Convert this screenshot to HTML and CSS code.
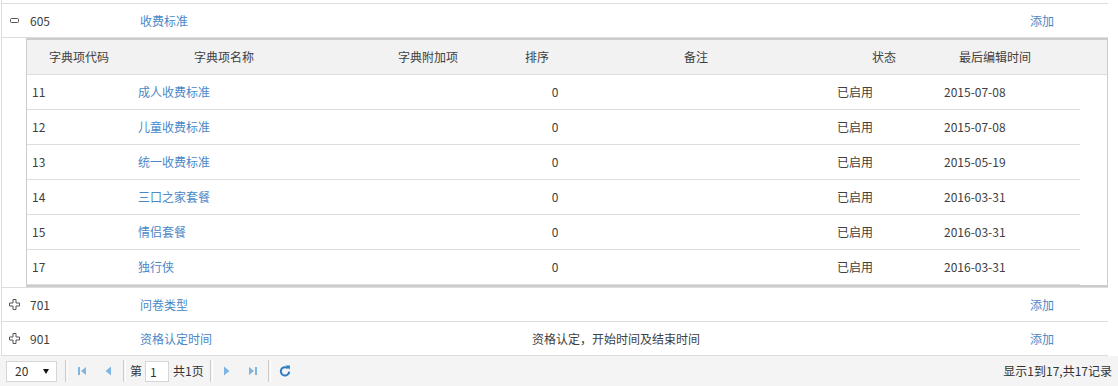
FILE: index.html
```html
<!DOCTYPE html>
<html lang="zh-CN">
<head>
  <meta charset="UTF-8" />
  <title>数据字典</title>
  <link rel="stylesheet" href="styles.css">
</head>
<body>

<div class="grid">
  <div class="prev-row"></div>

  <!-- 605 expanded -->
  <div class="row">
    <div class="expander">
      <svg width="9" height="5" viewBox="0 0 9 5"><rect x="0.5" y="0.5" width="8" height="4" rx="1" fill="#fff" stroke="#555"/></svg>
    </div>
    <div class="code">605</div>
    <div class="name"><a href="#">收费标准</a></div>
    <div class="desc"></div>
    <div></div>
    <div class="op"><a href="#">添加</a></div>
  </div>

  <div class="detail">
    <div class="sub">
      <div class="sub-head">
        <div>字典项代码</div>
        <div>字典项名称</div>
        <div></div>
        <div>字典附加项</div>
        <div>排序</div>
        <div>备注</div>
        <div>状态</div>
        <div>最后编辑时间</div>
        <div></div>
      </div>
      <div class="sub-row">
        <div class="c-code">11</div>
        <div class="c-name"><a href="#">成人收费标准</a></div>
        <div></div>
        <div class="c-sort">0</div>
        <div></div>
        <div class="c-state">已启用</div>
        <div class="c-date">2015-07-08</div>
      </div>
      <div class="sub-row">
        <div class="c-code">12</div>
        <div class="c-name"><a href="#">儿童收费标准</a></div>
        <div></div>
        <div class="c-sort">0</div>
        <div></div>
        <div class="c-state">已启用</div>
        <div class="c-date">2015-07-08</div>
      </div>
      <div class="sub-row">
        <div class="c-code">13</div>
        <div class="c-name"><a href="#">统一收费标准</a></div>
        <div></div>
        <div class="c-sort">0</div>
        <div></div>
        <div class="c-state">已启用</div>
        <div class="c-date">2015-05-19</div>
      </div>
      <div class="sub-row">
        <div class="c-code">14</div>
        <div class="c-name"><a href="#">三口之家套餐</a></div>
        <div></div>
        <div class="c-sort">0</div>
        <div></div>
        <div class="c-state">已启用</div>
        <div class="c-date">2016-03-31</div>
      </div>
      <div class="sub-row">
        <div class="c-code">15</div>
        <div class="c-name"><a href="#">情侣套餐</a></div>
        <div></div>
        <div class="c-sort">0</div>
        <div></div>
        <div class="c-state">已启用</div>
        <div class="c-date">2016-03-31</div>
      </div>
      <div class="sub-row">
        <div class="c-code">17</div>
        <div class="c-name"><a href="#">独行侠</a></div>
        <div></div>
        <div class="c-sort">0</div>
        <div></div>
        <div class="c-state">已启用</div>
        <div class="c-date">2016-03-31</div>
      </div>
    </div>
  </div>

  <div class="row">
    <div class="expander">
      <svg width="11" height="11" viewBox="0 0 11 11"><path d="M4 .5h3v3.5h3.5v3H7v3.5H4V7H.5V4H4z" fill="#fff" stroke="#555"/></svg>
    </div>
    <div class="code">701</div>
    <div class="name"><a href="#">问卷类型</a></div>
    <div class="desc"></div>
    <div></div>
    <div class="op"><a href="#">添加</a></div>
  </div>

  <div class="row">
    <div class="expander">
      <svg width="11" height="11" viewBox="0 0 11 11"><path d="M4 .5h3v3.5h3.5v3H7v3.5H4V7H.5V4H4z" fill="#fff" stroke="#555"/></svg>
    </div>
    <div class="code">901</div>
    <div class="name"><a href="#">资格认定时间</a></div>
    <div class="desc">资格认定，开始时间及结束时间</div>
    <div></div>
    <div class="op"><a href="#">添加</a></div>
  </div>
</div>

<!-- Pager -->
<div class="pager">
  <div class="page-size">
    <span>20</span>
    <svg width="6" height="5" viewBox="0 0 6 5"><polygon points="0,0 6,0 3,5" fill="#111"/></svg>
  </div>
  <span class="sep"></span>
  <span class="btn">
    <svg width="16" height="16" viewBox="0 0 16 16"><rect x="4" y="4" width="2" height="8" fill="#7fb5e0"/><polygon points="12,4 7,8 12,12" fill="#7fb5e0"/></svg>
  </span>
  <span class="btn">
    <svg width="16" height="16" viewBox="0 0 16 16"><polygon points="11,3.5 5.5,8 11,12.5" fill="#7fb5e0"/></svg>
  </span>
  <span class="sep"></span>
  <span class="label">第</span>
  <span class="page-num">1</span>
  <span class="label total">共1页</span>
  <span class="sep"></span>
  <span class="btn">
    <svg width="16" height="16" viewBox="0 0 16 16"><polygon points="5,3.5 10.5,8 5,12.5" fill="#7fb5e0"/></svg>
  </span>
  <span class="btn">
    <svg width="16" height="16" viewBox="0 0 16 16"><polygon points="4,4 9,8 4,12" fill="#7fb5e0"/><rect x="10" y="4" width="2" height="8" fill="#7fb5e0"/></svg>
  </span>
  <span class="sep"></span>
  <span class="btn refresh">
    <svg width="16" height="16" viewBox="0 0 16 16"><path d="M10.8 5.2A4.2 4.2 0 1 0 12.2 8.6" fill="none" stroke="#2d7cc1" stroke-width="2"/><polygon points="8.6,2.6 13,2.4 12.6,6.8" fill="#2d7cc1"/></svg>
  </span>
  <span class="info">显示1到17,共17记录</span>
</div>

</body>
</html>
```

FILE: styles.css
```css
body {
  margin: 0;
  font-family: "Microsoft YaHei", "Noto Sans CJK SC", sans-serif;
  font-size: 12px;
  color: #404040;
  background: #fff;
}

a {
  color: #4a88c7;
  text-decoration: none;
}

.grid {
  width: 1106px;
  margin-left: 1px;
  border-left: 1px solid #ddd;
}

.prev-row {
  height: 3px;
  border-bottom: 1px solid #ddd;
}

/* outer rows */
.row {
  display: grid;
  grid-template-columns: 24px 104px 200px 572px 74px 132px;
  height: 33px;
  align-items: center;
  border-bottom: 1px solid #ddd;
  line-height: 16px;
}

.expander {
  display: flex;
  justify-content: center;
  align-items: center;
}

.expander svg {
  display: block;
}

.code {
  padding-left: 4px;
}

.name {
  padding-left: 10px;
}

.desc,
.op {
  text-align: center;
}

/* detail sub grid */
.detail {
  padding-left: 24px;
  border-bottom: 1px solid #ddd;
}

.sub {
  border: 1px solid #ccc;
  border-top-width: 2px;
  border-bottom-width: 2px;
}

.sub-head {
  display: grid;
  grid-template-columns: 104px 186px 32px 158px 60px 258px 118px 104px 60px;
  height: 34px;
  align-items: center;
  text-align: center;
  background: #f2f2f2;
  border-bottom: 1px solid #ddd;
  line-height: 16px;
}

.sub-row {
  display: grid;
  width: 1053px;
  grid-template-columns: 104px 218px 158px 96px 222px 110px 145px;
  height: 34px;
  align-items: center;
  border-bottom: 1px solid #ddd;
  line-height: 16px;
}

.c-code {
  padding-left: 5px;
}

.c-name {
  padding-left: 7px;
}

.c-sort {
  text-align: center;
}

.c-state {
  padding-left: 12px;
}

.c-date {
  padding-left: 9px;
}

/* pager */
.pager {
  display: flex;
  align-items: center;
  height: 30px;
  padding: 0 6px;
  background: #f4f4f4;
  color: #333;
  line-height: 16px;
}

.page-size {
  display: flex;
  align-items: center;
  justify-content: space-between;
  box-sizing: border-box;
  width: 51px;
  height: 21px;
  padding: 0 7px 0 8px;
  background: #fff;
  border: 1px solid #d6d6d6;
}

.sep {
  width: 1px;
  height: 22px;
  margin-left: 8px;
  border-left: 1px solid #ccc;
  border-right: 1px solid #fff;
}

.btn {
  display: flex;
  justify-content: center;
  align-items: center;
  width: 22px;
  height: 22px;
  margin-left: 3px;
}

.btn + .btn {
  margin-left: 4px;
}

.btn + .sep {
  margin-left: 4px;
}

.label {
  margin-left: 4px;
}

.page-num {
  box-sizing: border-box;
  width: 24px;
  height: 21px;
  margin-left: 3px;
  padding-left: 4px;
  line-height: 19px;
  background: #fff;
  border: 1px solid #d6d6d6;
}

.total + .sep {
  margin-left: 6px;
}

.info {
  margin-left: auto;
}
```
